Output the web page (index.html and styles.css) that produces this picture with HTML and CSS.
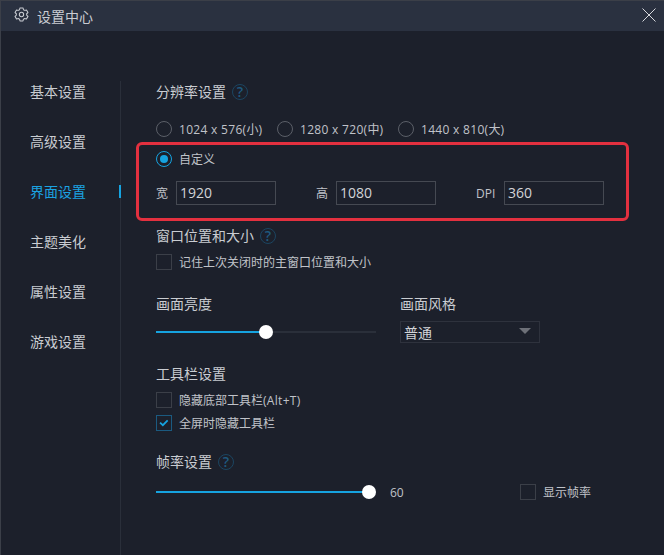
FILE: index.html
```html
<!DOCTYPE html>
<html lang="zh-CN">
<head>
<meta charset="utf-8">
<title>设置中心</title>
<link rel="stylesheet" href="styles.css">
</head>
<body>
<div class="window">
  <header class="titlebar">
    <div class="title-left">
      <svg class="gear" viewBox="0 0 16 16" fill="none" stroke="#c9ccd2" stroke-width="1.1" stroke-linejoin="round">
        <path d="M6.4 1h3.2l.5 1.9 1.3.7 1.9-.5 1.6 2.8-1.4 1.3v1.5l1.4 1.3-1.6 2.8-1.9-.5-1.3.7-.5 1.9H6.400l-.5-1.900-1.300-.7-1.900.5-1.600-2.800 1.400-1.300V7.200L1.100 5.900l1.600-2.800 1.900.5 1.300-.7z"/>
        <circle cx="8" cy="8" r="2.300"/>
      </svg>
      <span class="title-text">设置中心</span>
    </div>
    <svg class="close" viewBox="0 0 14 14" fill="none" stroke="#d8dade" stroke-width="1"><path d="M.5.5l13 13M13.500.5l-13 13"/></svg>
  </header>

  <div class="content">
    <nav class="sidebar">
      <div class="nav-item">基本设置</div>
      <div class="nav-item">高级设置</div>
      <div class="nav-item active">界面设置</div>
      <div class="nav-item">主题美化</div>
      <div class="nav-item">属性设置</div>
      <div class="nav-item">游戏设置</div>
    </nav>

    <main class="panel">
      <div class="heading">分辨率设置 <span class="help">?</span></div>

      <div class="row radios">
        <label class="opt opt-1"><span class="radio"></span><span><span class="latin">1024 x 576(</span>小<span class="latin">)</span></span></label>
        <label class="opt opt-2"><span class="radio"></span><span><span class="latin">1280 x 720(</span>中<span class="latin">)</span></span></label>
        <label class="opt"><span class="radio"></span><span><span class="latin">1440 x 810(</span>大<span class="latin">)</span></span></label>
      </div>
      <div class="row custom">
        <label class="opt"><span class="radio checked"></span>自定义</label>
      </div>
      <div class="fields">
        <div class="field"><span class="field-label">宽</span><span class="input">1920</span></div>
        <div class="field"><span class="field-label">高</span><span class="input">1080</span></div>
        <div class="field"><span class="field-label">DPI</span><span class="input">360</span></div>
      </div>

      <div class="heading h-window">窗口位置和大小 <span class="help">?</span></div>
      <div class="row check-first">
        <label class="opt"><span class="check"></span>记住上次关闭时的主窗口位置和大小</label>
      </div>

      <div class="display">
        <div class="display-col">
          <div class="heading">画面亮度</div>
          <div class="slider-wrap">
            <div class="slider">
              <span class="fill fill-half"></span><span class="thumb"></span><span class="rest"></span>
            </div>
          </div>
        </div>
        <div class="display-col">
          <div class="heading">画面风格</div>
          <div class="select"><span>普通</span><span class="caret"></span></div>
        </div>
      </div>

      <div class="heading h-toolbar">工具栏设置</div>
      <div class="row check-first">
        <label class="opt"><span class="check"></span><span>隐藏底部工具栏<span class="latin">(Alt+T)</span></span></label>
      </div>
      <div class="row check-next">
        <label class="opt"><span class="check checked">
          <svg viewBox="0 0 16 16" fill="none" stroke="#16a3e0" stroke-width="2"><path d="M3.500 7.500l3.200 3 5.500-5.500"/></svg>
        </span>全屏时隐藏工具栏</label>
      </div>

      <div class="heading h-rate">帧率设置 <span class="help">?</span></div>
      <div class="rate-row">
        <div class="slider">
          <span class="fill fill-max"></span><span class="thumb"></span><span class="rest"></span>
        </div>
        <span class="rate-value">60</span>
        <label class="opt"><span class="check"></span>显示帧率</label>
      </div>
    </main>
  </div>

  <div class="highlight"></div>
</div>
</body>
</html>
```

FILE: styles.css
```css
* { box-sizing: border-box; }
html, body { margin: 0; padding: 0; }
body { background: #3b3f48; width: 664px; height: 555px; overflow: hidden; }
.window {
  position: relative;
  margin: 1px 0 0 1px;
  width: 663px;
  height: 554px;
  background: #1c202b;
  color: #c9ccd1;
  font-family: "Open Sans", "Noto Sans CJK SC", sans-serif;
  font-size: 12px;
}
.titlebar {
  height: 30px;
  background: #2a3140;
  display: flex;
  align-items: center;
  justify-content: space-between;
  padding: 0 8px 0 13px;
}
.title-left { display: flex; align-items: center; gap: 8px; }
.gear { width: 15px; height: 15px; margin-top: -3px; }
.title-text { font-size: 14px; color: #c9ccd2; margin-top: -1px; }
.close { width: 14px; height: 14px; margin-top: -3px; }
.content { display: flex; margin-top: 50px; height: 474px; }
.sidebar {
  width: 120px;
  border-right: 1px solid #2a2f3a;
  padding-left: 29px;
  display: flex;
  flex-direction: column;
  gap: 28px;
}
.nav-item { height: 22px; line-height: 22px; font-size: 14px; color: #c9ccd1; position: relative; }
.nav-item.active { color: #1ba3e2; }
.nav-item.active::after {
  content: "";
  position: absolute;
  right: -1px;
  top: 4px;
  width: 2px;
  height: 13px;
  background: #16a3e0;
}
.panel { padding-left: 35px; flex: 1; }
.heading {
  height: 22px;
  line-height: 22px;
  font-size: 14px;
  color: #c9ccd1;
  display: flex;
  align-items: center;
  gap: 6px;
}
.help {
  width: 16px;
  height: 16px;
  border: 1.5px solid #1b4561;
  border-radius: 50%;
  color: #1f5a80;
  font-size: 14px;
  line-height: 13px;
  text-align: center;
  font-weight: 600;
}
.row { display: flex; height: 16px; }
.opt { display: flex; align-items: flex-start; gap: 7px; font-size: 12px; height: 16px; line-height: 18px; color: #c0c3c9; white-space: nowrap; }
.latin { letter-spacing: 0.3px; }
.radios { margin-top: 18px; }
.opt-1 { width: 121px; }
.opt-2 { width: 121px; }
.custom { margin-top: 14px; }
.radio {
  width: 16px;
  height: 16px;
  border: 1px solid #5b5f68;
  border-radius: 50%;
  flex: none;
  position: relative;
}
.radio.checked { border-color: #16a3e0; }
.radio.checked::after {
  content: "";
  position: absolute;
  left: 3px;
  top: 3px;
  width: 8px;
  height: 8px;
  border-radius: 50%;
  background: #16a3e0;
}
.fields { display: flex; margin-top: 14px; height: 24px; }
.field { display: flex; align-items: center; width: 160px; }
.field:last-child { width: 168px; }
.field-label { flex: 0 0 20px; font-size: 12px; color: #c0c3c9; white-space: nowrap; }
.field:last-child .field-label { flex-basis: 28px; }
.input {
  width: 100px;
  height: 24px;
  line-height: 22px;
  border: 1px solid #454952;
  padding-left: 3px;
  font-size: 14px;
  color: #d2d4d8;
}
.h-window { margin-top: 20px; }
.check-first { margin-top: 7px; }
.check-next { margin-top: 7px; }
.check {
  width: 16px;
  height: 16px;
  border: 1px solid #3b3f48;
  flex: none;
  display: block;
}
.check svg { display: block; width: 14px; height: 14px; }
.check.checked { border-color: #1b5a80; }
.display { display: flex; margin-top: 23px; }
.display-col { width: 244px; }
.slider-wrap { height: 14px; display: flex; align-items: center; margin-top: 10px; }
.slider { width: 220px; height: 14px; display: flex; align-items: center; flex: none; }
.fill { height: 2px; background: #16a3e0; flex: none; }
.fill-half { width: 110px; }
.fill-max { width: 213px; }
.rest { height: 2px; background: #2a2f3a; flex: 1; }
.thumb { width: 14px; height: 14px; border-radius: 50%; background: #fff; margin: 0 -7px; flex: none; position: relative; }
.select {
  width: 140px;
  height: 22px;
  margin-top: 6px;
  border: 1px solid #2e323d;
  display: flex;
  align-items: center;
  justify-content: space-between;
  padding: 0 8px 0 3px;
  font-size: 14px;
  color: #d2d4d8;
}
.caret {
  width: 0;
  height: 0;
  border-left: 6px solid transparent;
  border-right: 6px solid transparent;
  border-top: 6px solid #6d7078;
  margin-top: -3px;
}
.h-toolbar { margin-top: 20px; }
.h-rate { margin-top: 20px; }
.rate-row { display: flex; align-items: center; margin-top: 11px; height: 16px; }
.rate-value { width: 130px; margin-left: 14px; font-size: 12px; color: #c0c3c9; }
.highlight {
  position: absolute;
  left: 135px;
  top: 141px;
  width: 493px;
  height: 79px;
  border: 3px solid #e3303f;
  border-radius: 6px;
  pointer-events: none;
}
```
